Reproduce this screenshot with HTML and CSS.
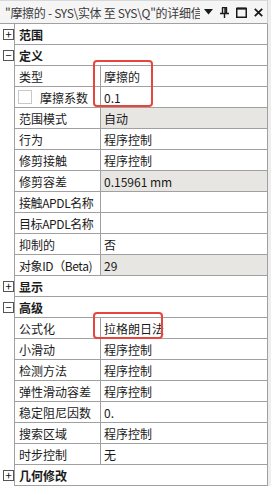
FILE: index.html
```html
<!DOCTYPE html>
<html lang="zh-cn">
<head>
    <meta charset="UTF-8">
    <title>详细信息</title>
    <link rel="stylesheet" href="styles.css">
</head>
<body>
<div class="panel">
    <div class="titlebar">
        <span class="title">"摩擦的 - SYS\实体 至 SYS\Q"的详细信息</span>
        <span class="tools">
            <svg width="9" height="6" viewBox="0 0 9 6"><path d="M0 0H9L4.5 5.5Z" fill="#1a1a1a"/></svg>
            <svg width="9" height="11" viewBox="0 0 9 11"><path d="M2 0.5H7M2.5 0.5V6M6.5 0.5V6M5 0.5V6M0 6.5H9M4.5 6.5V11" stroke="#1a1a1a" stroke-width="1.4" fill="none"/></svg>
            <svg width="11" height="11" viewBox="0 0 11 11"><rect x="0.75" y="1.5" width="9.5" height="8.75" stroke="#1a1a1a" stroke-width="1.5" fill="none"/><path d="M0.75 1.5H10.25" stroke="#1a1a1a" stroke-width="2"/></svg>
            <svg width="9" height="9" viewBox="0 0 9 9"><path d="M0.8 0.8L8.2 8.2M8.2 0.8L0.8 8.2" stroke="#1a1a1a" stroke-width="1.8"/></svg>
        </span>
    </div>

    <div class="row group"><span class="toggle">+</span><span class="cell head">范围</span></div>
    <div class="row group"><span class="toggle">−</span><span class="cell head">定义</span></div>
    <div class="row"><span></span><span class="cell">类型</span><span class="cell val">摩擦的</span></div>
    <div class="row"><span></span><span class="cell check"><i class="box"></i>摩擦系数</span><span class="cell val">0.1</span></div>
    <div class="row"><span></span><span class="cell">范围模式</span><span class="cell val ro">自动</span></div>
    <div class="row"><span></span><span class="cell">行为</span><span class="cell val">程序控制</span></div>
    <div class="row"><span></span><span class="cell">修剪接触</span><span class="cell val">程序控制</span></div>
    <div class="row"><span></span><span class="cell">修剪容差</span><span class="cell val ro">0.15961 mm</span></div>
    <div class="row"><span></span><span class="cell tight">接触APDL名称</span><span class="cell val"></span></div>
    <div class="row"><span></span><span class="cell tight">目标APDL名称</span><span class="cell val"></span></div>
    <div class="row"><span></span><span class="cell">抑制的</span><span class="cell val">否</span></div>
    <div class="row"><span></span><span class="cell tight">对象ID（Beta)</span><span class="cell val ro">29</span></div>
    <div class="row group"><span class="toggle">+</span><span class="cell head">显示</span></div>
    <div class="row group"><span class="toggle">−</span><span class="cell head">高级</span></div>
    <div class="row"><span></span><span class="cell">公式化</span><span class="cell val">拉格朗日法</span></div>
    <div class="row"><span></span><span class="cell">小滑动</span><span class="cell val">程序控制</span></div>
    <div class="row"><span></span><span class="cell">检测方法</span><span class="cell val">程序控制</span></div>
    <div class="row"><span></span><span class="cell">弹性滑动容差</span><span class="cell val">程序控制</span></div>
    <div class="row"><span></span><span class="cell">稳定阻尼因数</span><span class="cell val">0.</span></div>
    <div class="row"><span></span><span class="cell">搜索区域</span><span class="cell val">程序控制</span></div>
    <div class="row"><span></span><span class="cell">时步控制</span><span class="cell val">无</span></div>
    <div class="row group"><span class="toggle">+</span><span class="cell head">几何修改</span></div>

    <div class="mark mark-def"></div>
    <div class="mark mark-adv"></div>
</div>
</body>
</html>
```

FILE: styles.css
```css
body { margin: 0; background: #fff; font-family: "Noto Sans CJK SC", "Microsoft YaHei", sans-serif; font-size: 12px; color: #1a1a1a; }
.panel { position: relative; width: 268px; border-right: 3px solid #eeeeee; }
.titlebar { display: flex; align-items: center; height: 22px; background: #f5f5f5; border-top: 1px solid #d8d8d8; border-bottom: 1px solid #a0a0a0; border-right: 1px solid #d0d0d0; color: #3a3a3a; }
.title { width: 195px; padding-left: 5px; white-space: nowrap; overflow: hidden; letter-spacing: -0.3px; }
.tools { display: flex; align-items: center; gap: 7px; padding-left: 4px; }
.row { display: grid; grid-template-columns: 14px 86px 168px; height: 21px; }
.cell { display: flex; align-items: center; padding-left: 4px; border-left: 1px solid #a0a0a0; border-bottom: 1px solid #a0a0a0; white-space: nowrap; overflow: hidden; }
.tight { letter-spacing: -0.4px; }
.val { border-right: 1px solid #a0a0a0; padding-left: 3px; }
.ro { background: #e8e6e2; }
.group .head { grid-column: 2 / 4; font-weight: bold; border-right: 1px solid #a0a0a0; }
.toggle { display: flex; align-items: center; justify-content: center; width: 9px; height: 9px; margin: 5px 0 0 3px; border: 1px solid #555; font-size: 11px; line-height: 1; color: #111; background: #fff; }
.check { padding-left: 3px; }
.box { width: 12px; height: 12px; border: 1px solid #c8c8c8; margin-right: 8px; }
.mark { position: absolute; border: 2px solid #e8453c; border-radius: 4px; }
.mark-def { left: 93px; top: 60px; width: 56px; height: 43px; }
.mark-adv { left: 93px; top: 312px; width: 66px; height: 23px; }
```
